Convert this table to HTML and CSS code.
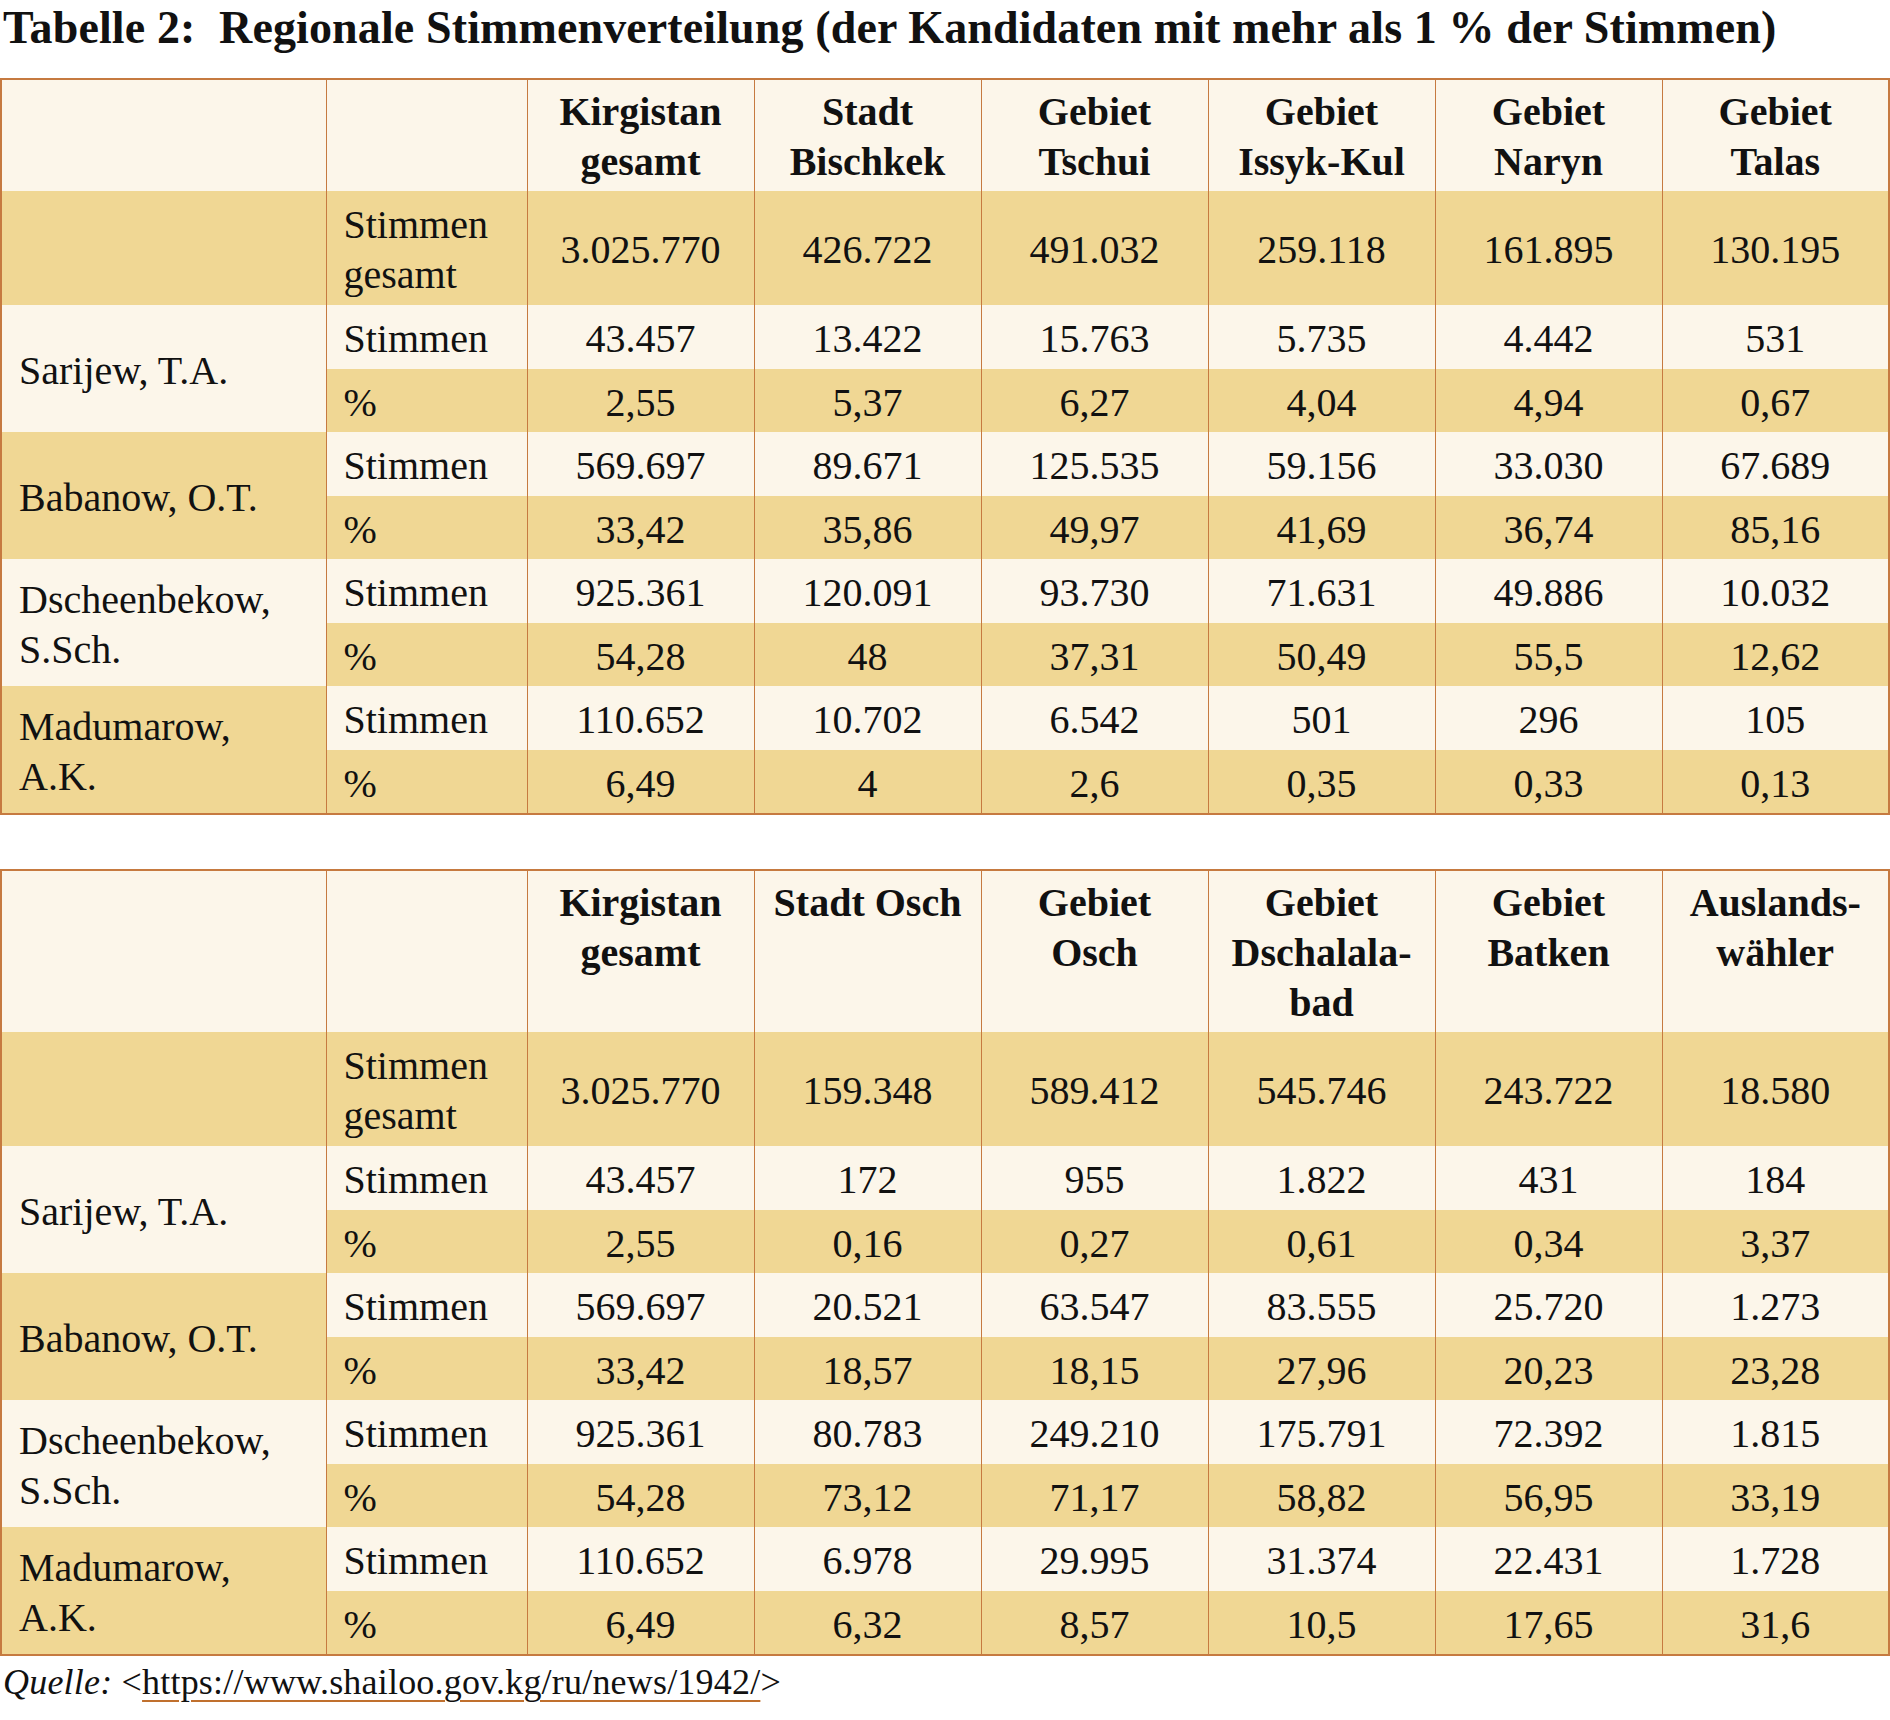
FILE: index.html
```html
<!DOCTYPE html>
<html lang="de">
<head>
<meta charset="utf-8">
<title>Tabelle 2: Regionale Stimmenverteilung</title>
<link rel="stylesheet" href="styles.css">
</head>
<body>
<h1 class="title"><span class="title-num">Tabelle 2:</span> Regionale Stimmenverteilung (der Kandidaten mit mehr als 1 % der Stimmen)</h1>

<table class="tbl">
  <colgroup>
    <col class="c-name"><col class="c-label">
    <col class="c-data"><col class="c-data"><col class="c-data"><col class="c-data"><col class="c-data"><col class="c-data">
  </colgroup>
  <tr class="light head">
    <th></th><th></th>
    <th>Kirgistan<br>gesamt</th><th>Stadt<br>Bischkek</th><th>Gebiet<br>Tschui</th><th>Gebiet<br>Issyk-Kul</th><th>Gebiet<br>Naryn</th><th>Gebiet<br>Talas</th>
  </tr>
  <tr class="dark total">
    <td></td><td class="label">Stimmen<br>gesamt</td>
    <td class="num">3.025.770</td><td class="num">426.722</td><td class="num">491.032</td><td class="num">259.118</td><td class="num">161.895</td><td class="num">130.195</td>
  </tr>
  <tr class="light">
    <td class="name light" rowspan="2">Sarijew, T.A.</td><td class="label">Stimmen</td>
    <td class="num">43.457</td><td class="num">13.422</td><td class="num">15.763</td><td class="num">5.735</td><td class="num">4.442</td><td class="num">531</td>
  </tr>
  <tr class="dark">
    <td class="label">%</td>
    <td class="num">2,55</td><td class="num">5,37</td><td class="num">6,27</td><td class="num">4,04</td><td class="num">4,94</td><td class="num">0,67</td>
  </tr>
  <tr class="light">
    <td class="name dark" rowspan="2">Babanow, O.T.</td><td class="label">Stimmen</td>
    <td class="num">569.697</td><td class="num">89.671</td><td class="num">125.535</td><td class="num">59.156</td><td class="num">33.030</td><td class="num">67.689</td>
  </tr>
  <tr class="dark">
    <td class="label">%</td>
    <td class="num">33,42</td><td class="num">35,86</td><td class="num">49,97</td><td class="num">41,69</td><td class="num">36,74</td><td class="num">85,16</td>
  </tr>
  <tr class="light">
    <td class="name light" rowspan="2">Dscheenbekow,<br>S.Sch.</td><td class="label">Stimmen</td>
    <td class="num">925.361</td><td class="num">120.091</td><td class="num">93.730</td><td class="num">71.631</td><td class="num">49.886</td><td class="num">10.032</td>
  </tr>
  <tr class="dark">
    <td class="label">%</td>
    <td class="num">54,28</td><td class="num">48</td><td class="num">37,31</td><td class="num">50,49</td><td class="num">55,5</td><td class="num">12,62</td>
  </tr>
  <tr class="light">
    <td class="name dark" rowspan="2">Madumarow,<br>A.K.</td><td class="label">Stimmen</td>
    <td class="num">110.652</td><td class="num">10.702</td><td class="num">6.542</td><td class="num">501</td><td class="num">296</td><td class="num">105</td>
  </tr>
  <tr class="dark">
    <td class="label">%</td>
    <td class="num">6,49</td><td class="num">4</td><td class="num">2,6</td><td class="num">0,35</td><td class="num">0,33</td><td class="num">0,13</td>
  </tr>
</table>

<table class="tbl tbl-second">
  <colgroup>
    <col class="c-name"><col class="c-label">
    <col class="c-data"><col class="c-data"><col class="c-data"><col class="c-data"><col class="c-data"><col class="c-data">
  </colgroup>
  <tr class="light head">
    <th></th><th></th>
    <th>Kirgistan<br>gesamt</th><th>Stadt Osch</th><th>Gebiet<br>Osch</th><th>Gebiet<br>Dschalala-<br>bad</th><th>Gebiet<br>Batken</th><th>Auslands-<br>wähler</th>
  </tr>
  <tr class="dark total">
    <td></td><td class="label">Stimmen<br>gesamt</td>
    <td class="num">3.025.770</td><td class="num">159.348</td><td class="num">589.412</td><td class="num">545.746</td><td class="num">243.722</td><td class="num">18.580</td>
  </tr>
  <tr class="light">
    <td class="name light" rowspan="2">Sarijew, T.A.</td><td class="label">Stimmen</td>
    <td class="num">43.457</td><td class="num">172</td><td class="num">955</td><td class="num">1.822</td><td class="num">431</td><td class="num">184</td>
  </tr>
  <tr class="dark">
    <td class="label">%</td>
    <td class="num">2,55</td><td class="num">0,16</td><td class="num">0,27</td><td class="num">0,61</td><td class="num">0,34</td><td class="num">3,37</td>
  </tr>
  <tr class="light">
    <td class="name dark" rowspan="2">Babanow, O.T.</td><td class="label">Stimmen</td>
    <td class="num">569.697</td><td class="num">20.521</td><td class="num">63.547</td><td class="num">83.555</td><td class="num">25.720</td><td class="num">1.273</td>
  </tr>
  <tr class="dark">
    <td class="label">%</td>
    <td class="num">33,42</td><td class="num">18,57</td><td class="num">18,15</td><td class="num">27,96</td><td class="num">20,23</td><td class="num">23,28</td>
  </tr>
  <tr class="light">
    <td class="name light" rowspan="2">Dscheenbekow,<br>S.Sch.</td><td class="label">Stimmen</td>
    <td class="num">925.361</td><td class="num">80.783</td><td class="num">249.210</td><td class="num">175.791</td><td class="num">72.392</td><td class="num">1.815</td>
  </tr>
  <tr class="dark">
    <td class="label">%</td>
    <td class="num">54,28</td><td class="num">73,12</td><td class="num">71,17</td><td class="num">58,82</td><td class="num">56,95</td><td class="num">33,19</td>
  </tr>
  <tr class="light">
    <td class="name dark" rowspan="2">Madumarow,<br>A.K.</td><td class="label">Stimmen</td>
    <td class="num">110.652</td><td class="num">6.978</td><td class="num">29.995</td><td class="num">31.374</td><td class="num">22.431</td><td class="num">1.728</td>
  </tr>
  <tr class="dark">
    <td class="label">%</td>
    <td class="num">6,49</td><td class="num">6,32</td><td class="num">8,57</td><td class="num">10,5</td><td class="num">17,65</td><td class="num">31,6</td>
  </tr>
</table>

<p class="source"><em>Quelle:</em> &lt;<span class="link">https://www.shailoo.gov.kg/ru/news/1942/</span>&gt;</p>
</body>
</html>
```

FILE: styles.css
```css
html, body {
  margin: 0;
  padding: 0;
  background: #ffffff;
}

body {
  color: #111111;
  font-family: "Liberation Serif", "Times New Roman", serif;
}

.title {
  margin: 0 0 22px 3px;
  font-size: 46px;
  line-height: 56px;
  font-weight: bold;
  letter-spacing: 0.12px;
  white-space: nowrap;
}

.title-num {
  margin-right: 12px;
}

.tbl {
  border-collapse: collapse;
  table-layout: fixed;
  width: 1889px;
  border: 2px solid #c67a40;
  font-size: 40px;
  line-height: 50px;
}

.tbl-second {
  margin-top: 54px;
}

.c-name { width: 325px; }
.c-label { width: 201px; }
.c-data { width: 227px; }

.tbl th,
.tbl td {
  border-left: 1px solid #c67a40;
  border-right: 1px solid #c67a40;
  white-space: nowrap;
}

.tbl th {
  padding: 7px 17px 3.5px;
  font-weight: bold;
  text-align: center;
  vertical-align: top;
}

.tbl td {
  padding: 9px 17px 4.5px;
  font-weight: normal;
  vertical-align: middle;
}

.tbl .total td {
  padding-bottom: 5.5px;
}

.tbl .label {
  text-align: left;
}

.tbl .num {
  text-align: center;
}

.tbl .name {
  text-align: left;
}

.light,
.tbl td.light {
  background: #fcf6ea;
}

.dark,
.tbl td.dark {
  background: #f0d794;
}

.source {
  margin: 4px 0 0 3px;
  font-size: 36px;
  line-height: 44px;
  letter-spacing: 0.2px;
}

.source em {
  font-style: italic;
}

.link {
  text-decoration: underline;
  text-decoration-color: #c0702e;
  text-decoration-thickness: 2px;
  text-underline-offset: 6px;
}
```
